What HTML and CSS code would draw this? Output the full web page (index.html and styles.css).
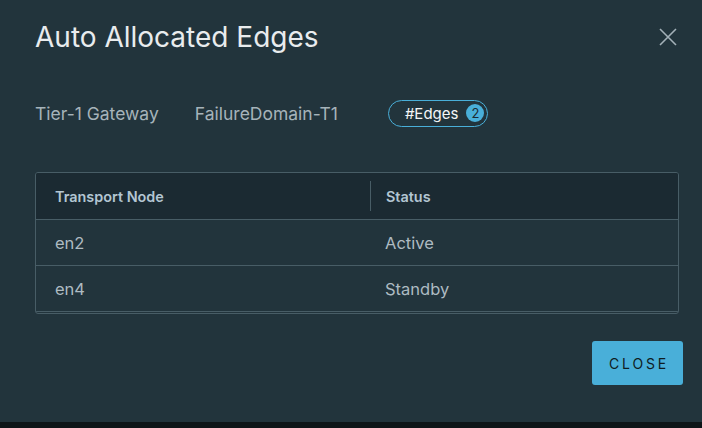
FILE: index.html
```html
<!DOCTYPE html>
<html>
<head>
<meta charset="utf-8">
<link rel="stylesheet" href="styles.css">
</head>
<body>
<div class="modal">
  <div class="modal-header">
    <h1 class="title">Auto Allocated Edges</h1>
    <button class="close-x" aria-label="Close">
      <svg width="18" height="18" viewBox="0 0 18 18"><path d="M1 1 L17 17 M17 1 L1 17" stroke="#a3b1b8" stroke-width="1.6" fill="none"/></svg>
    </button>
  </div>
  <div class="meta">
    <span class="meta-item">Tier-1 Gateway</span>
    <span class="meta-item">FailureDomain-T1</span>
    <span class="pill"><span>#Edges</span><span class="badge">2</span></span>
  </div>
  <div class="grid">
    <div class="grid-head">
      <div class="col col-1">Transport Node</div>
      <div class="col col-2">Status</div>
    </div>
    <div class="grid-row">
      <div class="col col-1">en2</div>
      <div class="col col-2">Active</div>
    </div>
    <div class="grid-row">
      <div class="col col-1">en4</div>
      <div class="col col-2">Standby</div>
    </div>
  </div>
  <div class="footer">
    <button class="btn">CLOSE</button>
  </div>
</div>
<div class="backdrop"></div>
</body>
</html>
```

FILE: styles.css
```css
html, body {
  margin: 0;
  padding: 0;
  background: #0e1518;
}
body {
  font-family: "Inter", "Lato", sans-serif;
  width: 702px;
  height: 428px;
  overflow: hidden;
}
.modal {
  background: #22343c;
  height: 422px;
  box-sizing: border-box;
  padding: 17px 23px 0 35px;
}
.modal-header {
  display: flex;
  align-items: center;
  justify-content: space-between;
  height: 40px;
}
.title {
  margin: 0;
  font-weight: 400;
  font-size: 28px;
  color: #e9ecee;
  letter-spacing: 0;
}
.close-x {
  background: none;
  border: 0;
  padding: 0;
  margin-right: 2px;
  width: 18px;
  height: 18px;
  display: flex;
}
.meta {
  display: flex;
  align-items: center;
  margin-top: 42px;
  height: 28px;
  font-size: 17.5px;
  color: #a6b3ba;
}
.meta-item {
  margin-right: 36px;
}
.meta-item + .meta-item {
  margin-right: 50px;
}
.pill {
  display: inline-flex;
  align-items: center;
  box-sizing: border-box;
  height: 27px;
  width: 100px;
  border: 1px solid #49afd9;
  border-radius: 14px;
  padding-left: 16px;
  color: #f4f6f7;
  font-size: 15px;
}
.badge {
  display: inline-flex;
  align-items: center;
  justify-content: center;
  width: 18px;
  height: 18px;
  border-radius: 50%;
  background: #49afd9;
  color: #1b2a32;
  font-size: 13px;
  margin-left: 8px;
}
.grid {
  margin-top: 45px;
  border: 1px solid #485d66;
  border-radius: 3px;
  overflow: hidden;
  padding-bottom: 1px;
}
.grid-head {
  display: flex;
  height: 46px;
  align-items: center;
  background: #1b2a32;
  border-bottom: 1px solid #485d66;
  font-size: 14.4px;
  font-weight: 600;
  color: #b3c6d2;
}
.grid-row {
  display: flex;
  height: 45px;
  align-items: center;
  border-bottom: 1px solid #485d66;
  font-size: 16.5px;
  color: #aebbc2;
}
.col-1 {
  width: 334px;
  box-sizing: border-box;
  padding-left: 19px;
}
.col-2 {
  flex: 1;
  padding-left: 15px;
}
.grid-head .col-2 {
  border-left: 1px solid #485d66;
  height: 30px;
  display: flex;
  align-items: center;
}
.footer {
  display: flex;
  justify-content: flex-end;
  margin-top: 27px;
  margin-right: -4px;
}
.btn {
  width: 91px;
  height: 44px;
  border: 0;
  border-radius: 3px;
  background: #49afd9;
  color: #0f1c22;
  font-family: "Inter", sans-serif;
  font-size: 14px;
  letter-spacing: 2.8px;
  padding: 0 0 0 3px;
}
.backdrop {
  height: 6px;
  background: #0e1518;
}
```
